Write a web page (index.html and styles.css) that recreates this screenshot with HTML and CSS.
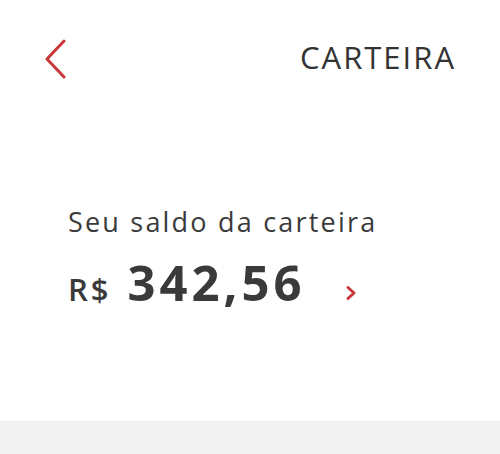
FILE: index.html
```html
<!DOCTYPE html>
<html lang="pt-BR">
<head>
<meta charset="utf-8">
<link rel="stylesheet" href="styles.css">
</head>
<body>
<div class="screen">
  <header class="header">
    <button class="back" aria-label="Voltar">
      <svg width="24" height="40" viewBox="0 0 24 40"><path d="M19 2 L2 20 L19 38" fill="none" stroke="#c8383a" stroke-width="3" stroke-linecap="round" stroke-linejoin="round"/></svg>
    </button>
    <h1 class="title">CARTEIRA</h1>
  </header>
  <section class="balance">
    <p class="label">Seu saldo da carteira</p>
    <div class="amount-row">
      <span class="currency">R$</span>
      <span class="value">342,56</span>
      <svg class="arrow" width="12" height="16" viewBox="0 0 12 16"><path d="M3 2.5 L9 8 L3 13.5" fill="none" stroke="#c8383a" stroke-width="3" stroke-linecap="round" stroke-linejoin="round"/></svg>
    </div>
  </section>
  <div class="footer-band"></div>
</div>
</body>
</html>
```
FILE: styles.css
```css
* { box-sizing: border-box; }
html, body { margin: 0; padding: 0; background: #ffffff; }
body { font-family: "Open Sans", sans-serif; color: #3a3a3a; }
.screen { width: 500px; height: 454px; display: flex; flex-direction: column; }
.header {
  display: flex; align-items: center; justify-content: space-between;
  padding: 38px 44px 0 45px; height: 80px;
}
.back { background: none; border: 0; padding: 0; margin: 0; display: flex; }
.title { margin: 0 0 4px; font-size: 31px; line-height: 40px; font-weight: 400; letter-spacing: 2px; color: #333; }
.balance { padding: 125px 0 0 68px; flex: 1; }
.label { margin: 0; font-size: 27px; font-weight: 400; color: #3a3a3a; line-height: 34px; letter-spacing: 2.2px; }
.amount-row { display: flex; align-items: baseline; margin-top: 13px; }
.currency { font-size: 31px; font-weight: 600; color: #3a3a3a; line-height: 40px; letter-spacing: 3px; }
.value { font-size: 49px; font-weight: 700; color: #3a3a3a; margin-left: 16px; line-height: 60px; letter-spacing: 4px; }
.arrow { margin-left: 39px; margin-bottom: 1px; }
.footer-band { height: 33px; background: #f2f2f2; border-top: 1px solid #ececec; }
```
